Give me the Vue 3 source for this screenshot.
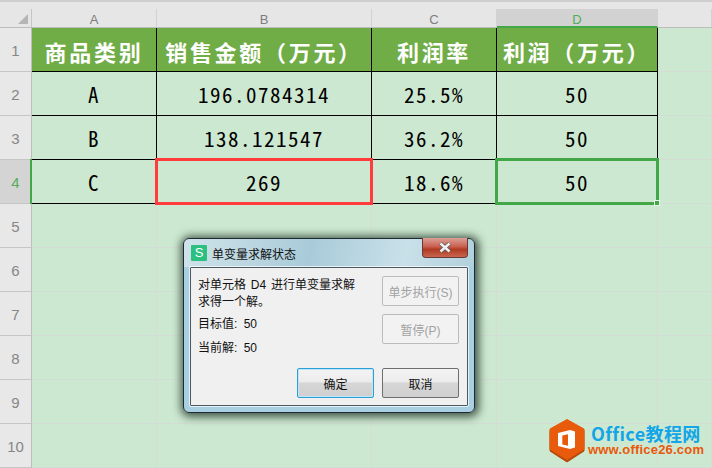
<script setup>
const cols = [
  { name: 'A', w: 125 },
  { name: 'B', w: 215 },
  { name: 'C', w: 125 },
  { name: 'D', w: 161, active: true },
  { name: '', w: 54 },
]
const head = ['商品类别', '销售金额（万元）', '利润率', '利润（万元）']
const data = [
  ['A', '196.0784314', '25.5%', '50'],
  ['B', '138.121547', '36.2%', '50'],
  ['C', '269', '18.6%', '50'],
]
const emptyRows = [5, 6, 7, 8, 9, 10]
</script>

<template>
  <div class="page">
    <div class="strip"></div>
    <div class="colhead">
      <div class="corner"><span class="tri"></span></div>
      <div v-for="c in cols" :key="c.name" class="ch" :class="{ on: c.active }" :style="{ width: c.w + 'px' }">{{ c.name }}</div>
    </div>
    <div class="row">
      <div class="rh">1</div>
      <div v-for="(h, i) in head" :key="h" class="cell hd" :class="'c' + i">{{ h }}</div>
      <div class="cell blank c4"></div>
    </div>
    <div v-for="(r, ri) in data" :key="ri" class="row">
      <div class="rh" :class="{ on: ri === 2 }">{{ ri + 2 }}</div>
      <div v-for="(v, i) in r" :key="i" class="cell dt" :class="'c' + i">{{ v }}</div>
      <div class="cell blank c4"></div>
    </div>
    <div v-for="n in emptyRows" :key="n" class="row">
      <div class="rh">{{ n }}</div>
      <div v-for="i in 5" :key="i" class="cell blank" :class="'c' + (i - 1)"></div>
    </div>

    <div class="redbox"></div>
    <div class="greenbox"><span class="handle"></span></div>
    <div class="leftbar"></div>

    <div class="dialog">
      <div class="titlebar">
        <span class="appicon">S</span>
        <span class="title">单变量求解状态</span>
        <span class="close">
          <svg width="14" height="11" viewBox="0 0 14 11"><path d="M2.5 1.5 L11.5 9.5 M11.5 1.5 L2.5 9.5" stroke="#55585c" stroke-width="4" fill="none"/><path d="M2.5 1.5 L11.5 9.5 M11.5 1.5 L2.5 9.5" stroke="#f2f2f2" stroke-width="2.4" fill="none"/></svg>
        </span>
      </div>
      <div class="body">
        <div class="msg">
          <p class="l1">对单元格 D4 进行单变量求解</p>
          <p class="l2">求得一个解。</p>
          <p class="l3">目标值: 50</p>
          <p class="l4">当前解: 50</p>
        </div>
        <div class="side">
          <button class="btn off">单步执行(S)</button>
          <button class="btn off">暂停(P)</button>
        </div>
        <div class="foot">
          <button class="btn act primary">确定</button>
          <button class="btn act">取消</button>
        </div>
      </div>
    </div>

    <div class="logo">
      <svg class="hex" width="36" height="44" viewBox="0 0 36 44">
        <path d="M18 2 L35 11.5 L35 32 L18 43 L1 32 L1 11.5 Z" fill="#b84a08" stroke="#b84a08" stroke-linejoin="round"/>
        <path d="M18 0.5 L35 10 L35 30 L18 40.5 L1 30 L1 10 Z" fill="#e85a0c" stroke="#e85a0c" stroke-linejoin="round"/>
        <path d="M21 11 L26 12.5 L26 28.5 L21 30 L9 27 L9 14 Z" fill="#fff"/>
        <path d="M13.3 16.5 L19 15.2 L19 26.8 L13.3 25.5 Z" fill="#e85a0c"/>
      </svg>
      <div class="logotext">
        <div class="lt1">Office教程网</div>
        <div class="lt2">www.office26.com</div>
      </div>
    </div>
  </div>
</template>

<style>
html, body { margin: 0; padding: 0; background: #cde8d0; }
</style>

<style scoped>
.page {
  position: relative;
  width: 712px;
  height: 468px;
  overflow: hidden;
  background: #cde8d0;
  font-family: "Liberation Sans", "Noto Sans CJK SC", sans-serif;
}
.strip {
  height: 9px;
  background: #e6e6e6;
  border-top: 2px solid #cfcfcf;
  box-sizing: border-box;
}
.colhead {
  display: flex;
  height: 19px;
  background: #e6e6e6;
  box-sizing: border-box;
  border-bottom: 1px solid #bdbdbd;
}
.corner {
  width: 32px;
  flex: none;
  position: relative;
  box-sizing: border-box;
  border-right: 1px solid #c6c6c6;
}
.tri {
  position: absolute;
  right: 3px;
  bottom: 3px;
  width: 0;
  height: 0;
  border-left: 10px solid transparent;
  border-bottom: 10px solid #b5b5b5;
}
.ch {
  flex: none;
  box-sizing: border-box;
  border-right: 1px solid #d2d2d2;
  text-align: center;
  font-size: 13px;
  line-height: 22px;
  color: #7d7d7d;
}
.ch.on {
  background: #d2d2d2;
  color: #4fae56;
  margin-bottom: -1px;
  height: 19px;
  border-bottom: 2px solid #42a747;
  line-height: 21px;
}
.row {
  display: flex;
  height: 44px;
}
.rh {
  width: 32px;
  flex: none;
  box-sizing: border-box;
  background: #e8e8e8;
  border-right: 1px solid #bdbdbd;
  border-bottom: 1px solid #c6c6c6;
  text-align: center;
  font-size: 15px;
  line-height: 46px;
  color: #868686;
}
.rh.on { background: #d4d4d4; color: #55ad5c; }
.cell {
  flex: none;
  box-sizing: border-box;
  text-align: center;
  height: 44px;
}
.c0 { width: 125px; }
.c1 { width: 215px; }
.c2 { width: 125px; }
.c3 { width: 161px; }
.c4 { width: 54px; }
.hd {
  background: #70ad47;
  color: #fff;
  font-family: "Noto Sans CJK SC", sans-serif;
  font-size: 22px;
  font-weight: 700;
  letter-spacing: 2.7px;
  line-height: 46px;
  white-space: nowrap;
  border-right: 1px solid #000;
  border-bottom: 1px solid #000;
}
.dt {
  color: #000;
  font-family: "Noto Sans CJK SC", sans-serif;
  font-feature-settings: "hwid";
  font-size: 21px;
  letter-spacing: 1.5px;
  line-height: 45px;
  border-right: 1px solid #000;
  border-bottom: 1px solid #000;
}
.blank {
  border-right: 1px solid #d3ddd4;
  border-bottom: 1px solid #d3ddd4;
}
.redbox {
  position: absolute;
  left: 155px;
  top: 158px;
  width: 218px;
  height: 47px;
  box-sizing: border-box;
  border: 3px solid #ff3b3b;
}
.greenbox {
  position: absolute;
  left: 495px;
  top: 158px;
  width: 164px;
  height: 47px;
  box-sizing: border-box;
  border: 3px solid #42a747;
}
.handle {
  position: absolute;
  right: -4px;
  bottom: -4px;
  width: 4px;
  height: 4px;
  background: #42a747;
  border: 1px solid #e8f5ea;
}
.leftbar {
  position: absolute;
  left: 30px;
  top: 159px;
  width: 2px;
  height: 45px;
  background: #42a747;
}
.dialog {
  position: absolute;
  left: 183px;
  top: 238px;
  width: 292px;
  height: 175px;
  box-sizing: border-box;
  border: 1px solid #1f2a30;
  border-radius: 6px;
  padding: 0 6px 6px;
  display: flex;
  flex-direction: column;
  background:
    linear-gradient(to bottom, rgba(168, 208, 226, 0) 0, rgba(168, 208, 226, 0) 28px, #a8d0e2 28px),
    linear-gradient(100deg, #cfe3ea 0%, #a9cbd9 40%, #c9e0e9 70%, #a8cad8 100%);
  box-shadow: 1px 1px 9px 3px rgba(20, 40, 30, 0.75);
}
.titlebar {
  height: 28px;
  flex: none;
  display: flex;
  align-items: center;
  position: relative;
  padding-left: 1px;
}
.appicon {
  width: 16px;
  height: 16px;
  background: #2bc07f;
  color: #fff;
  font-size: 13px;
  line-height: 16px;
  text-align: center;
  border-radius: 1px;
  margin-right: 5px;
}
.title {
  font-size: 12px;
  color: #111;
  letter-spacing: 0;
}
.close {
  position: absolute;
  right: 0;
  top: -1px;
  width: 46px;
  height: 20px;
  box-sizing: border-box;
  border: 1px solid #6b3a36;
  border-top: 0;
  border-radius: 0 0 4px 4px;
  background: linear-gradient(#dca097 0%, #c9604f 45%, #b03a22 60%, #c8664f 100%);
  display: flex;
  align-items: center;
  justify-content: center;
}
.body {
  flex: 1;
  position: relative;
  box-sizing: border-box;
  background: #f0f0f0;
  border: 1px solid #4c5a60;
  border-radius: 1px;
  box-shadow: 0 0 0 1px rgba(255, 255, 255, 0.7);
  font-size: 12px;
  color: #111;
}
.msg {
  position: absolute;
  left: 7px;
  top: 9px;
}
.msg p {
  margin: 0;
  line-height: 17px;
  white-space: nowrap;
}
.msg .l1 { word-spacing: 1.5px; }
.msg .l3 { margin-top: 5px; word-spacing: 3px; }
.msg .l4 { margin-top: 7px; word-spacing: 3px; }
.side {
  position: absolute;
  left: 191px;
  top: 8px;
  display: flex;
  flex-direction: column;
  gap: 8px;
}
.foot {
  position: absolute;
  left: 106px;
  top: 100px;
  display: flex;
  gap: 8px;
}
.btn {
  width: 77px;
  height: 30px;
  padding: 0;
  box-sizing: border-box;
  font-family: inherit;
  font-size: 12px;
  border-radius: 2px;
}
.btn.off {
  background: #f2f2f2;
  border: 1px solid #bcbcbc;
  color: #a2a2a2;
}
.btn.act {
  border: 1px solid #6f6f6f;
  color: #111;
  background: linear-gradient(#f3f3f3 0%, #ececec 46%, #d6d6d6 50%, #cfcfcf 100%);
}
.btn.primary {
  border: 1px solid #2b9fd8;
  box-shadow: inset 0 0 0 1px #bfe6f7;
}
.logo {
  position: absolute;
  left: 549px;
  top: 419px;
  display: flex;
  align-items: flex-start;
}
.hex { flex: none; }
.logotext { margin-left: 4px; padding-top: 3px; }
.lt1 {
  font-family: "Noto Sans CJK SC", sans-serif;
  font-weight: 700;
  font-size: 18px;
  line-height: 22px;
  color: #12a5e8;
  white-space: nowrap;
  letter-spacing: 0.4px;
  padding-left: 2px;
}
.lt2 {
  font-family: "Liberation Sans", sans-serif;
  font-weight: 700;
  font-size: 13px;
  line-height: 12px;
  color: #e8590c;
  white-space: nowrap;
  letter-spacing: 0.2px;
  margin-left: -1px;
}
</style>
